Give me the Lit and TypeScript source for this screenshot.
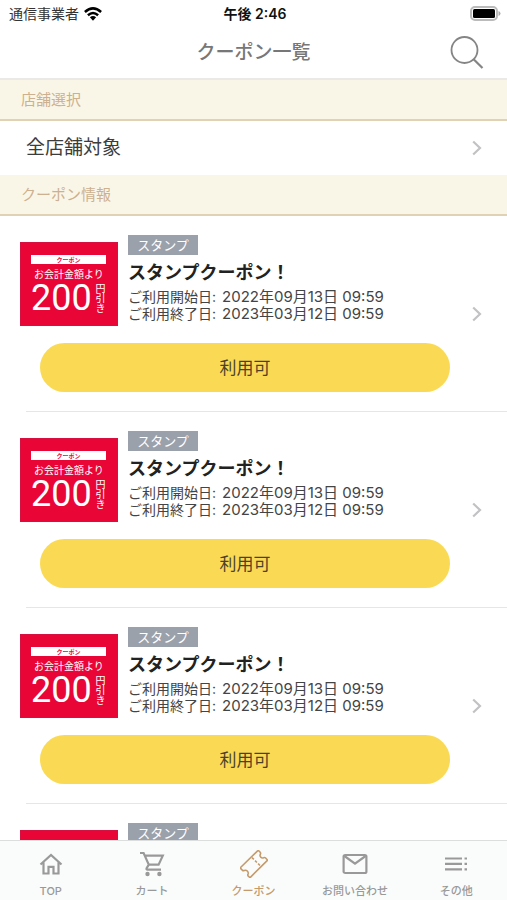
import { LitElement, html, css, svg } from "lit";
import { customElement, property } from "lit/decorators.js";

interface Coupon {
  badge: string;
  title: string;
  start: string;
  end: string;
}

const coupons: Coupon[] = Array.from({ length: 4 }, () => ({
  badge: "スタンプ",
  title: "スタンプクーポン！",
  start: "2022年09月13日 09:59",
  end: "2023年03月12日 09:59",
}));

const chevron = html`<svg width="10" height="16" viewBox="0 0 10 16" fill="none" stroke="#c2c2c4" stroke-width="2.2" aria-hidden="true">
  <path d="M1.2 1.5 8 8l-6.800 6.500" />
</svg>`;

const tabs = [
  {
    label: "TOP",
    icon: svg`<path d="M3.500 14.500 14 5l10.500 9.500M6.500 12.500V23.500h5V16.800h5v6.700h5V12.500" />`,
  },
  {
    label: "カート",
    icon: svg`<path d="M2 3h3.600l5.200 11.600h9.800L24.800 5.600H7M10.800 14.600 8.600 18.200q-.6 1.400.900 1.400H23" />
      <circle cx="9.500" cy="24" r="2.200" fill="currentColor" stroke="none" />
      <circle cx="21.400" cy="24" r="2.200" fill="currentColor" stroke="none" />`,
  },
  {
    label: "クーポン",
    icon: svg`<g stroke-width="1.600" stroke-linejoin="round">
      <path d="M.800 17.200 17.600 .900Q18.300 .300 19 1L20.200 2.300Q21 3.200 20.300 4.400C19.300 6.500 21.400 8.600 23.600 7.700Q24.700 7.100 25.600 8L27 9.500Q27.600 10.200 26.900 10.900L10.600 27.100Q9.900 27.700 9.200 27L8.300 26.100Q7.500 25.200 8 24.100C8.900 21.800 6.500 19.400 4.200 20.500Q3.100 21 2.300 20.100L.800 18.700Q.200 17.900.800 17.200Z" />
      <path d="M12 7.600 20.400 15.900" stroke-dasharray="2.600 1.700" />
    </g>`,
  },
  {
    label: "お問い合わせ",
    icon: svg`<rect x="2.600" y="5" width="22.800" height="18" rx="1.600" /><path d="M3.400 6 14 13.600 24.600 6" />`,
  },
  {
    label: "その他",
    icon: svg`<path d="M3 8.500h17M3 13.900h17M3 19.300h17M22.500 8.500H25M22.500 13.900H25M22.500 19.300H25" />`,
  },
];

@customElement("status-bar")
export class StatusBar extends LitElement {
  static styles = css`
    :host {
      display: grid;
      grid-template-columns: 1fr auto 1fr;
      align-items: center;
      height: 27px;
      padding: 0 6px 0 9px;
      color: #111;
      font-size: 14px;
      line-height: 20px;
    }
    .carrier { display: flex; align-items: center; gap: 5px; color: #333; }
    .time { font-weight: 600; }
    .battery { justify-self: end; }
    svg { display: block; }
  `;
  render() {
    return html`
      <div class="carrier">
        <span>通信事業者</span>
        <svg width="18" height="14" viewBox="0 0 18 14" fill="none" stroke="#000" stroke-width="2.500" aria-hidden="true">
          <path d="M.900 5Q9-2.300 17.100 5M3.900 8.300Q9 3.700 14.100 8.300" />
          <path d="M5.900 10.200Q9 7.600 12.100 10.200L9 13.700Z" fill="#000" stroke="none" />
        </svg>
      </div>
      <div class="time">午後 2:46</div>
      <svg class="battery" width="31" height="15" viewBox="0 0 31 15" aria-hidden="true">
        <rect x="1" y="1" width="26" height="13" rx="4" fill="#fff" stroke="#bbb" stroke-width="2" />
        <rect x="3" y="3" width="22" height="9" rx="1.500" fill="#000" />
        <path d="M28.500 5v5Q30.500 9.200 30.500 7.500T28.500 5Z" fill="#aaa" />
      </svg>
    `;
  }
}

@customElement("coupon-item")
export class CouponItem extends LitElement {
  @property({ attribute: false }) coupon!: Coupon;

  static styles = css`
    :host { display: block; }
    .item {
      display: grid;
      grid-template-columns: 1fr 10px;
      column-gap: 22px;
      align-items: center;
      padding: 19px 25px 19px 20px;
    }
    .summary { display: flex; align-items: flex-start; gap: 10px; }
    .thumb {
      box-sizing: border-box;
      flex: none;
      width: 98px;
      height: 84px;
      margin-top: 7px;
      padding: 12px 11px 0 10px;
      border: 1px solid #d8103f;
      background: #ea0537;
      color: #fff;
      overflow: hidden;
    }
    .ribbon {
      height: 9px;
      background: #fff;
      color: #ea0537;
      font-size: 6px;
      line-height: 9px;
      font-weight: 700;
      text-align: center;
    }
    .lead { margin: 4px 0 0 3px; font-size: 10px; line-height: 12px; white-space: nowrap; }
    .amount { display: flex; justify-content: space-between; align-items: center; height: 36px; }
    .number { font-family: Roboto, sans-serif; font-size: 36px; line-height: 36px; }
    .unit { writing-mode: vertical-rl; font-size: 10px; line-height: 12px; white-space: nowrap; }
    .info { min-width: 0; }
    .badge {
      width: 70px;
      background: #9ba1ab;
      color: #fff;
      font-size: 13px;
      line-height: 20px;
      text-align: center;
    }
    .title { margin: 6px 0 3px; color: #222; font-size: 18px; line-height: 24px; font-weight: 700; }
    .dates { margin: 0; color: #444; font-size: 14px; line-height: 17px; }
    .date { display: flex; gap: 6px; white-space: nowrap; }
    dd { margin: 0; font-size: 15px; }
    .use {
      display: block;
      width: calc(100% - 20px);
      height: 49px;
      margin: 17px 0 0 20px;
      padding: 0 0 2px;
      border: 0;
      border-radius: 25px;
      background: #fada54;
      color: #4a4228;
      font: inherit;
      font-size: 17px;
    }
    .more svg { display: block; }
    .rule { height: 1px; margin-left: 26px; background: #e6e6e8; }
  `;
  render() {
    const c = this.coupon;
    return html`
      <article class="item">
        <div>
          <div class="summary">
            <div class="thumb">
              <div class="ribbon">クーポン</div>
              <div class="lead">お会計金額より</div>
              <div class="amount"><span class="number">200</span><span class="unit">円引き</span></div>
            </div>
            <div class="info">
              <div class="badge">${c.badge}</div>
              <h3 class="title">${c.title}</h3>
              <dl class="dates">
                <div class="date"><dt>ご利用開始日:</dt><dd>${c.start}</dd></div>
                <div class="date"><dt>ご利用終了日:</dt><dd>${c.end}</dd></div>
              </dl>
            </div>
          </div>
          <button class="use" type="button">利用可</button>
        </div>
        <a class="more" href="#coupon" aria-label="クーポン詳細">${chevron}</a>
      </article>
      <div class="rule"></div>
    `;
  }
}

@customElement("app-root")
export class AppRoot extends LitElement {
  static styles = css`
    :host {
      display: flex;
      flex-direction: column;
      height: 100vh;
      overflow: hidden;
      background: #fff;
      font-family: Inter, "Noto Sans CJK JP", sans-serif;
    }
    .header {
      display: grid;
      grid-template-columns: 1fr auto 1fr;
      align-items: center;
      height: 51px;
      padding: 0 22px;
      border-bottom: 2px solid #ebe9e5;
    }
    .heading { grid-column: 2; margin: 0; color: #777; font-size: 19px; line-height: 28px; font-weight: 500; }
    .search { justify-self: end; padding: 0; border: 0; background: none; }
    .search svg { display: block; }
    .content { flex: 1; min-height: 0; overflow: hidden; }
    .section {
      margin: 0;
      padding: 0 21px;
      border-bottom: 2px solid #e0d2b4;
      background: #faf6e7;
      color: #cdb08f;
      font-size: 15px;
      line-height: 39px;
      font-weight: 400;
    }
    .store {
      display: flex;
      align-items: center;
      justify-content: space-between;
      padding: 0 25px 0 26px;
      color: #3c3c3a;
      font-size: 19px;
      line-height: 54px;
      text-decoration: none;
    }
    .tabs { display: flex; height: 59px; border-top: 1px solid #dcdedd; background: #fafcfb; }
    .tab {
      flex: 1 0 0;
      display: flex;
      flex-direction: column;
      align-items: center;
      gap: 5px;
      padding-top: 9px;
      color: #999;
      font-size: 11px;
      line-height: 16px;
      font-weight: 500;
      text-decoration: none;
      white-space: nowrap;
    }
    .tab.active { color: #c59a6b; }
  `;
  render() {
    return html`
      <status-bar></status-bar>
      <header class="header">
        <h1 class="heading">クーポン一覧</h1>
        <button class="search" type="button" aria-label="検索">
          <svg width="36" height="34" viewBox="0 0 36 34" fill="none" stroke="#858585" stroke-width="1.800">
            <circle cx="15.500" cy="14" r="13" />
            <path d="M24.600 23.200 33.500 32" stroke-width="2.200" />
          </svg>
        </button>
      </header>
      <main class="content">
        <h2 class="section">店舗選択</h2>
        <a class="store" href="#store"><span>全店舗対象</span>${chevron}</a>
        <h2 class="section">クーポン情報</h2>
        ${coupons.map((c) => html`<coupon-item .coupon=${c}></coupon-item>`)}
      </main>
      <nav class="tabs">
        ${tabs.map(
          (t) => html`<a class="tab ${t.label === "クーポン" ? "active" : ""}" href="#tab">
            <svg width="28" height="28" viewBox="0 0 28 28" fill="none" stroke="currentColor" stroke-width="2.200" aria-hidden="true">${t.icon}</svg>
            <span>${t.label}</span>
          </a>`
        )}
      </nav>
    `;
  }
}
